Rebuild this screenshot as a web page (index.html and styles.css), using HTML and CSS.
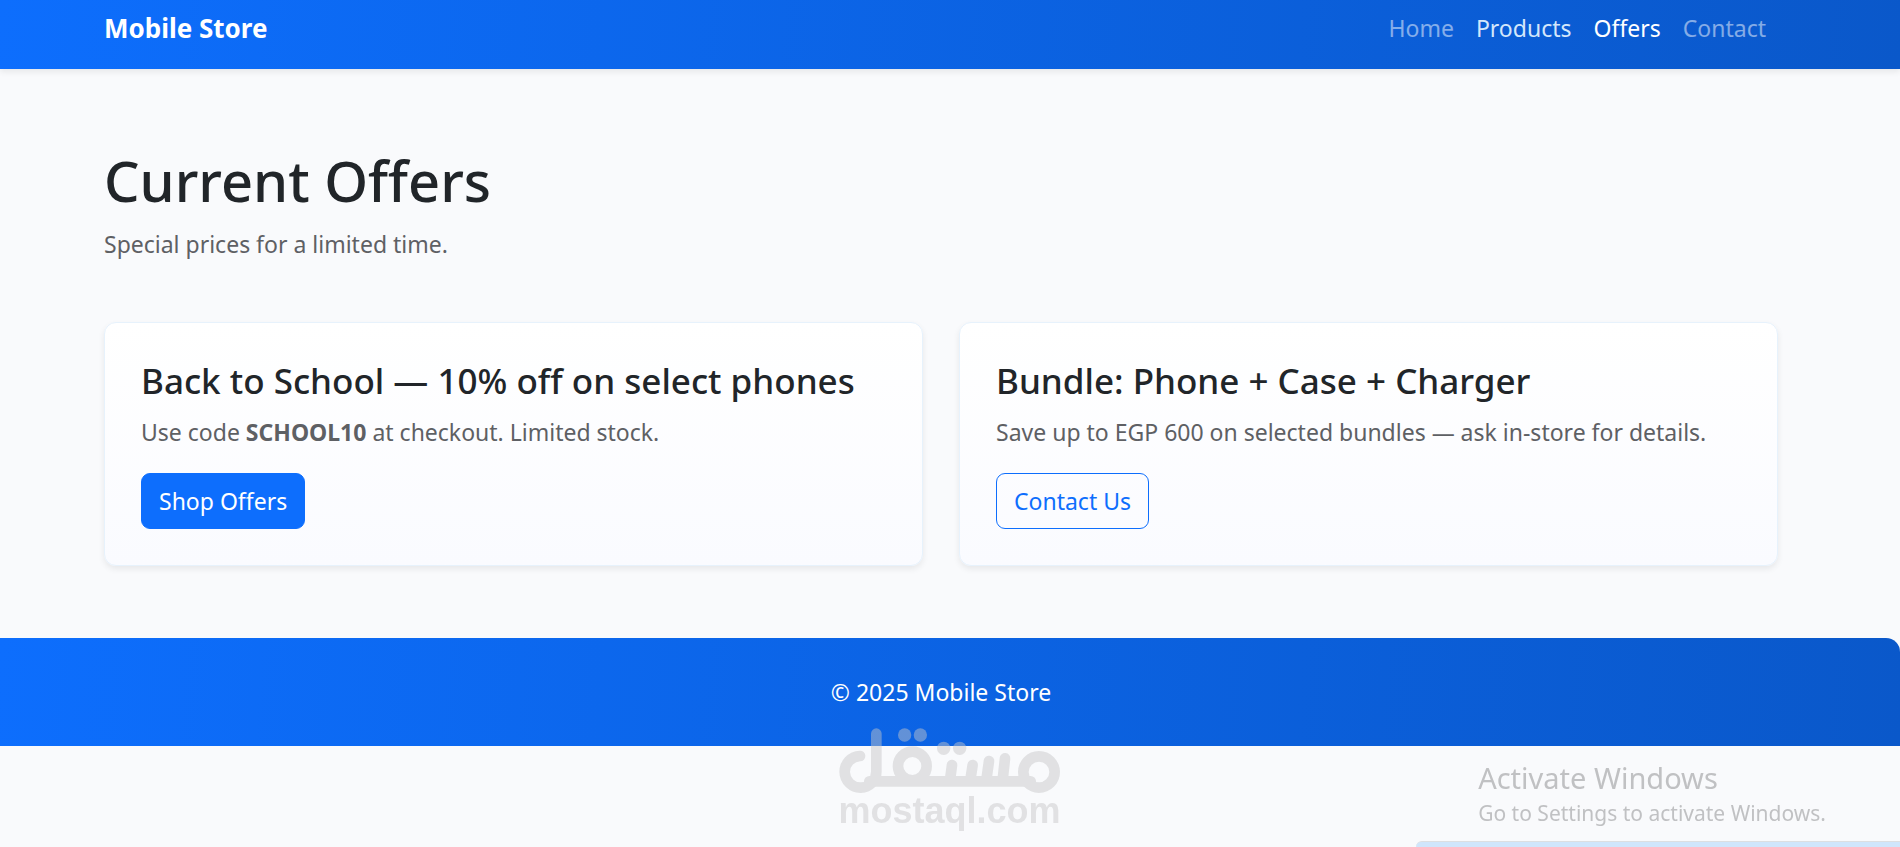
FILE: index.html
```html
<!DOCTYPE html>
<html lang="en">
<head>
<meta charset="utf-8">
<meta name="viewport" content="width=device-width, initial-scale=1">
<title>Mobile Store - Offers</title>
<link rel="stylesheet" href="styles.css">
</head>
<body>
<header class="navbar">
  <a class="brand" href="#">Mobile Store</a>
  <nav class="nav">
    <a class="nav-link" href="#">Home</a>
    <a class="nav-link hover" href="#">Products</a>
    <a class="nav-link active" href="#" aria-current="page">Offers</a>
    <a class="nav-link" href="#">Contact</a>
  </nav>
</header>
<main class="main">
  <h1 class="title">Current Offers</h1>
  <p class="text">Special prices for a limited time.</p>
  <div class="offers">
    <article class="card">
      <h2 class="card-title">Back to School — 10% off on select phones</h2>
      <p class="text">Use code <strong>SCHOOL10</strong> at checkout. Limited stock.</p>
      <a class="btn btn-primary" href="#">Shop Offers</a>
    </article>
    <article class="card">
      <h2 class="card-title">Bundle: Phone + Case + Charger</h2>
      <p class="text">Save up to EGP 600 on selected bundles — ask in-store for details.</p>
      <a class="btn btn-outline" href="#">Contact Us</a>
    </article>
  </div>
</main>
<footer class="footer">© 2025 Mobile Store</footer>

<div class="watermark">
  <svg class="watermark-logo" viewBox="177 204 663 196" role="img" aria-label="مستقل">
    <g fill="none" stroke="#c6c6c8" stroke-width="32" stroke-linecap="round">
      <path d="M240 288A47.500 47.500 0 1 0 289 335V221"/>
      <path d="M268 364H752"/>
      <circle cx="397" cy="318" r="43"/>
      <circle cx="777" cy="336" r="47"/>
      <path d="M516 315L510 360M578 315L571 360M627 303L619 360M675 295L668 360"/>
    </g>
    <g fill="#c6c6c8">
      <circle cx="374" cy="225" r="20"/><circle cx="421" cy="225" r="20"/>
      <circle cx="491" cy="265" r="20"/><circle cx="539" cy="265" r="20"/>
    </g>
  </svg>
  <span class="watermark-text">mostaql.com</span>
</div>
<aside class="activate">
  <p class="activate-title">Activate Windows</p>
  <p class="activate-text">Go to Settings to activate Windows.</p>
</aside>
<div class="panel-edge"></div>
</body>
</html>
```
FILE: styles.css
```css
* { box-sizing: border-box; }

body {
  margin: 0;
  min-height: 100vh;
  background: #f9fafc;
  color: #212529;
  font-family: "Noto Sans", "Open Sans", sans-serif;
  font-size: 23px;
  line-height: 36px;
  overflow: hidden;
}

h1, h2, p { margin: 0; }
a { text-decoration: none; }

.navbar, .main, .footer { padding-left: 104px; padding-right: 122px; }

.navbar {
  position: relative;
  display: flex;
  align-items: center;
  justify-content: space-between;
  padding-top: 10px;
  padding-bottom: 23px;
  background: linear-gradient(95deg, #0d6efd, #0a58ca);
  box-shadow: 0 3px 6px rgba(0, 0, 0, 0.075);
}

.brand { color: #fff; font-size: 26px; font-weight: 700; }
.nav { display: flex; gap: 22px; padding-right: 12px; }
.nav-link { color: rgba(255, 255, 255, 0.5); }
.nav-link.hover { color: #d3e7fb; }
.nav-link.active { color: #fff; }

.main { padding-top: 75px; padding-bottom: 72px; }
.title { margin-bottom: 10px; font-size: 56px; line-height: 72px; font-weight: 500; }
.text { color: #5e6064; }

.offers { display: grid; grid-template-columns: 1fr 1fr; gap: 36px; margin-top: 60px; }

.card {
  padding: 36px;
  border: 1px solid #e7f2fc;
  border-radius: 12px;
  background: linear-gradient(#fff, #fafbff);
  box-shadow: 0 3px 6px rgba(0, 0, 0, 0.075);
}
.card-title { margin-bottom: 11px; font-size: 35px; line-height: 44px; font-weight: 500; }

.btn {
  display: inline-block;
  margin-top: 23px;
  padding: 9px 17px;
  border: 1px solid #0d6efd;
  border-radius: 9px;
}
.btn-primary { background: #0d6efd; color: #fff; }
.btn-outline { color: #0d6efd; }

.footer {
  padding-top: 36px;
  padding-bottom: 36px;
  border-top-right-radius: 14px;
  background: linear-gradient(95deg, #0d6efd, #0a58ca);
  color: #fff;
  text-align: center;
}

.watermark {
  position: fixed;
  left: calc(50% - 111px);
  bottom: 14px;
  width: 221px;
  display: flex;
  flex-direction: column;
  align-items: center;
  opacity: 0.47;
  color: #c6c6c8;
}
.watermark-logo { width: 100%; }
.watermark-text { font: 700 36px/36px "Liberation Sans", sans-serif; padding-bottom: 4px; }

.activate { position: fixed; right: 74px; bottom: 18px; color: #c0c1c3; }
.activate-title { font-size: 29px; line-height: 38px; }
.activate-text { font-size: 21px; line-height: 32px; }

.panel-edge {
  position: fixed;
  right: 0;
  bottom: 0;
  width: 484px;
  height: 6px;
  border-top: 1px solid #dcdfe2;
  border-top-left-radius: 6px;
  background: #d0e6fc;
}
```
